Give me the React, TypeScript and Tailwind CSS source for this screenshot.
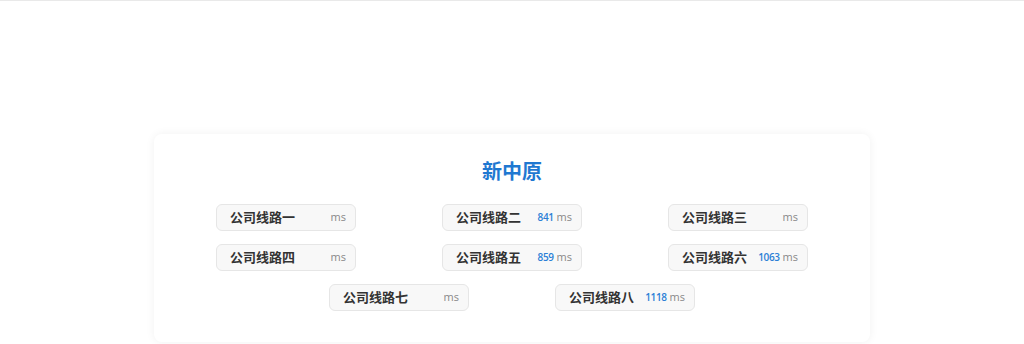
import React from "react";

const lines: { name: string; ms?: number }[] = [
  { name: "公司线路一" },
  { name: "公司线路二", ms: 841 },
  { name: "公司线路三" },
  { name: "公司线路四" },
  { name: "公司线路五", ms: 859 },
  { name: "公司线路六", ms: 1063 },
  { name: "公司线路七" },
  { name: "公司线路八", ms: 1118 },
];

export default function App() {
  return (
    <div
      className="min-h-[344px] bg-white border-t border-[#e9e9e9]"
      style={{ fontFamily: '"Open Sans", "Noto Sans CJK SC", sans-serif' }}
    >
      <div className="mx-auto mt-[133px] w-[716px] rounded-lg bg-white pt-[24px] pb-[31px] shadow-[0_0_10px_rgba(0,0,0,0.06)]">
        <h1 className="text-center text-[20px] font-bold leading-[28px] text-[#1f78d1]">新中原</h1>
        <div className="mx-auto mt-[18px] flex w-[592px] flex-wrap justify-center gap-x-[86px] gap-y-[13px]">
          {lines.map((l) => (
            <div
              key={l.name}
              className="flex h-[27px] w-[140px] items-center justify-between rounded-md border border-[#e6e6e6] bg-[#f8f8f8] pl-[13px] pr-[9px]"
            >
              <span className="text-[13px] font-bold text-[#333333]">{l.name}</span>
              <span className="flex items-baseline gap-[3px]">
                {l.ms !== undefined && (
                  <span className="text-[10px] font-semibold tracking-[-0.4px] text-[#2b7fd6]">{l.ms}</span>
                )}
                <span className="text-[11px] text-[#888888]">ms</span>
              </span>
            </div>
          ))}
        </div>
      </div>
    </div>
  );
}
